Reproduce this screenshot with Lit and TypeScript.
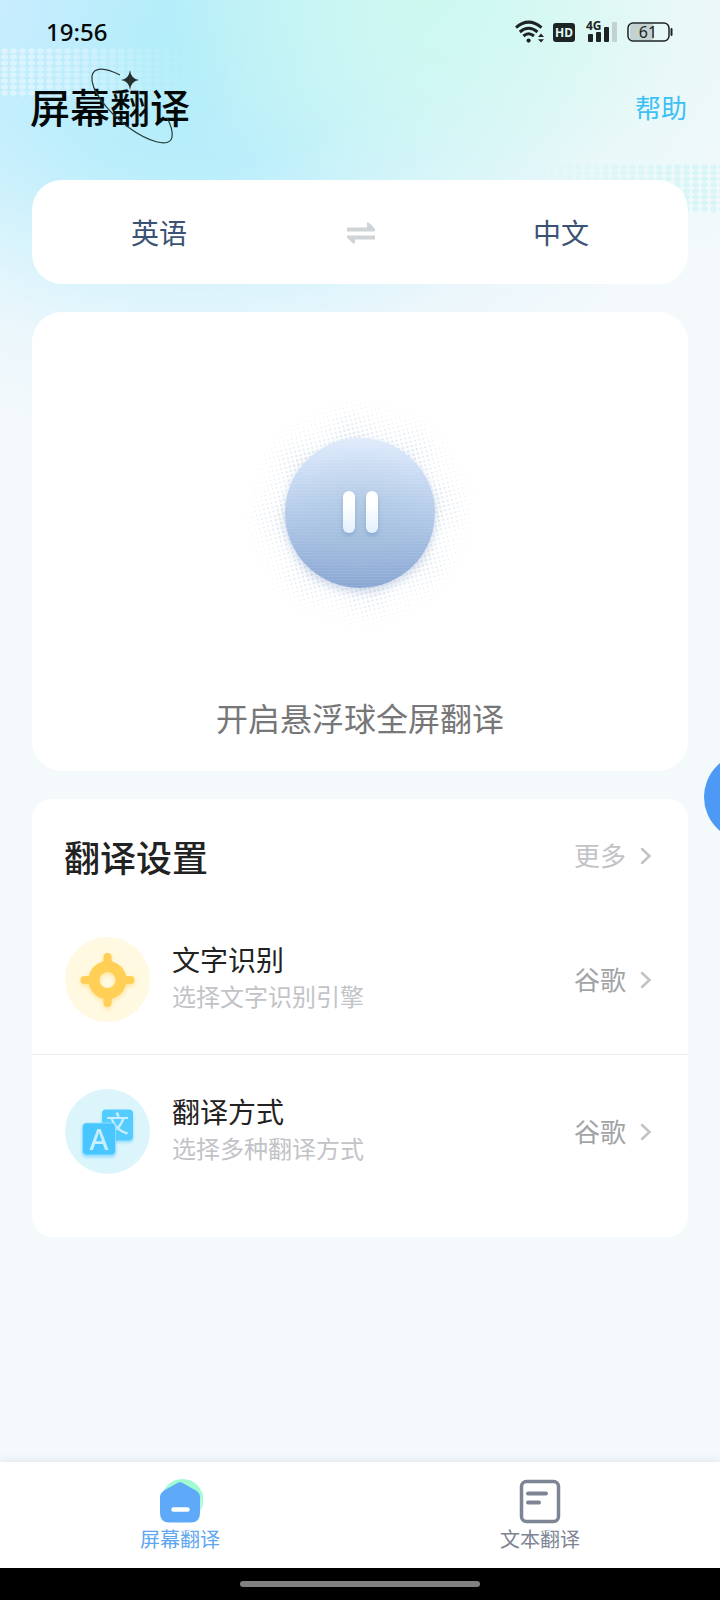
import { LitElement, html, svg, css } from "lit";
import { customElement, property, state } from "lit/decorators.js";
import { classMap } from "lit/directives/class-map.js";

/** Squares of a tilted halftone ring that shrink away from the knob. */
function halftonePath(inner: number, outer: number): string {
  const pitch = 4.4;
  const tilt = -0.24;
  const steps = Math.ceil(outer / pitch);
  let d = "";
  for (let i = -steps; i <= steps; i++) {
    for (let j = -steps; j <= steps; j++) {
      const x = (i * Math.cos(tilt) - j * Math.sin(tilt)) * pitch;
      const y = (i * Math.sin(tilt) + j * Math.cos(tilt)) * pitch;
      const r = Math.hypot(x, y);
      if (r < inner || r > outer) continue;
      const fade = 1 - (r - inner) / (outer - inner);
      const ripple = 0.82 + 0.18 * Math.cos(Math.atan2(y, x) * 8 + 0.8);
      const s = 0.3 + 2.8 * fade * ripple;
      d += `M${(x - s / 2).toFixed(2)} ${(y - s / 2).toFixed(2)}h${s.toFixed(2)}v${s.toFixed(2)}h-${s.toFixed(2)}z`;
    }
  }
  return d;
}

const HALFTONE = halftonePath(72, 120);

const base = css`
  * {
    box-sizing: border-box;
  }
  svg {
    display: block;
    flex: none;
  }
  button {
    margin: 0;
    padding: 0;
    border: 0;
    background: none;
    font: inherit;
    color: inherit;
    cursor: pointer;
  }
  a {
    color: inherit;
    text-decoration: none;
  }
`;

@customElement("status-bar")
export class StatusBar extends LitElement {
  static styles = [
    base,
    css`
      :host {
        display: flex;
        align-items: center;
        justify-content: space-between;
        height: 64px;
        padding: 0 47px 0 46px;
      }
      .time {
        font-size: 24px;
        line-height: 32px;
        font-weight: 500;
        color: #050808;
      }
      .icons {
        display: flex;
        align-items: center;
        gap: 8px;
      }
      .latin {
        font-family: "Noto Sans", sans-serif;
      }
    `,
  ];

  render() {
    return html`
      <span class="time">19:56</span>
      <span class="icons">
        <svg width="30" height="24" viewBox="0 0 30 24" aria-label="Wi-Fi">
          <g fill="none" stroke="#1d2424" stroke-width="3">
            <path d="M1 7.6Q13.5-3.4 26.5 7.6" />
            <path d="M4.800 12Q13.500 4.600 22.500 12" />
            <path d="M8.400 16Q13.500 11.600 19 16" />
          </g>
          <circle cx="13.600" cy="20.600" r="2.100" fill="#1d2424" />
          <path d="M23 17l3-3.600 3 3.600zM23 19.200l3 3.400 3-3.400z" fill="#1d2424" />
        </svg>
        <svg width="22" height="24" viewBox="0 0 22 24" aria-label="HD">
          <rect y="3" width="22" height="19" rx="3" fill="#1d2424" />
          <text class="latin" x="11" y="17" text-anchor="middle" font-size="12" font-weight="700" fill="#e4f8f6">HD</text>
        </svg>
        <svg width="36" height="32" viewBox="0 -4 36 32" aria-label="4G">
          <text class="latin" x="3" y="10" font-size="12" font-weight="700" fill="#1d2424">4G</text>
          <g fill="#1d2424">
            <rect x="5" y="14" width="5" height="8" rx="1" />
            <rect x="13" y="12" width="5" height="10" rx="1" />
            <rect x="21" y="7" width="5" height="15" rx="1" />
          </g>
          <rect x="29" y="2" width="5" height="20" rx="1" fill="#c3d2d1" />
        </svg>
        <svg width="46" height="24" viewBox="0 0 46 24" aria-label="61%">
          <rect x="3" y="4" width="24" height="16" rx="3" fill="#c3d2d1" />
          <rect x="1" y="3" width="41" height="18" rx="5" fill="none" stroke="#1d2424" stroke-width="1.500" />
          <path d="M44.500 9v6" stroke="#1d2424" stroke-width="2" stroke-linecap="round" />
          <text class="latin" x="21" y="18" text-anchor="middle" font-size="16" fill="#1d2424">61</text>
        </svg>
      </span>
    `;
  }
}

@customElement("setting-row")
export class SettingRow extends LitElement {
  @property() heading = "";
  @property() note = "";
  @property() value = "";
  @property() icon = "";

  static styles = [
    base,
    css`
      :host {
        display: block;
      }
      .row {
        display: flex;
        align-items: center;
        width: 100%;
        gap: 22px;
        padding: 34px 36px 32px 33px;
        text-align: left;
      }
      .copy {
        flex: 1;
        display: flex;
        flex-direction: column;
        padding-bottom: 4px;
      }
      .heading {
        font-size: 28px;
        line-height: 38px;
        color: #222;
      }
      .note {
        font-size: 24px;
        line-height: 36px;
        color: #c2c3c7;
      }
      .value {
        display: flex;
        align-items: center;
        gap: 14px;
        font-size: 26px;
        line-height: 36px;
        color: #a3a4a8;
      }
      .glyph {
        font-family: "Noto Sans", "Noto Sans CJK SC", sans-serif;
      }
    `,
  ];

  private target() {
    return html`<svg width="85" height="85" viewBox="0 0 85 85" aria-hidden="true">
      <defs>
        <filter id="glow" x="-30%" y="-30%" width="160%" height="160%">
          <feDropShadow dx="0" dy="2" stdDeviation="2" flood-color="#ffc94a" flood-opacity="0.5" />
        </filter>
      </defs>
      <circle cx="42.500" cy="42.500" r="42.500" fill="#fff9e1" />
      <g filter="url(#glow)" fill="none" stroke="#ffcf57">
        <circle cx="42.500" cy="43" r="13.500" stroke-width="11" />
        <path d="M42.500 20v6M42.500 60v6M19.500 43h6M59.500 43h6" stroke-width="8" stroke-linecap="round" />
      </g>
    </svg>`;
  }

  private translate() {
    return html`<svg width="85" height="85" viewBox="0 0 85 85" aria-hidden="true">
      <defs>
        <filter id="glow" x="-30%" y="-30%" width="160%" height="160%">
          <feDropShadow dx="0" dy="2" stdDeviation="1.500" flood-color="#4cc4ff" flood-opacity="0.5" />
        </filter>
      </defs>
      <circle cx="42.500" cy="42.500" r="42.500" fill="#dcf5fb" />
      <g filter="url(#glow)">
        <rect x="37" y="20.500" width="31" height="31" rx="4" fill="#54ccff" />
        <text class="glyph" x="52.500" y="43" text-anchor="middle" font-size="23" font-weight="500" fill="#c9efff">文</text>
      </g>
      <g filter="url(#glow)">
        <rect x="17.500" y="34" width="33" height="32" rx="4" fill="#48c6ff" stroke="#9be1ff" stroke-width="0.800" />
        <text class="glyph" x="34" y="60.500" text-anchor="middle" font-size="29" font-weight="500" fill="#c9efff">A</text>
      </g>
    </svg>`;
  }

  render() {
    return html`
      <button class="row" type="button">
        ${this.icon === "target" ? this.target() : this.translate()}
        <span class="copy">
          <span class="heading">${this.heading}</span>
          <span class="note">${this.note}</span>
        </span>
        <span class="value">
          ${this.value}
          <svg width="12" height="20" viewBox="0 0 12 20" aria-hidden="true">
            <path d="M2 3l7.500 7-7.500 7" fill="none" stroke="#c2c3c7" stroke-width="2.500" stroke-linecap="round" />
          </svg>
        </span>
      </button>
    `;
  }
}

@customElement("app-root")
export class AppRoot extends LitElement {
  @state() private source = "英语";
  @state() private dest = "中文";
  @state() private tab = 0;

  static styles = [
    base,
    css`
      :host {
        position: relative;
        display: flex;
        flex-direction: column;
        min-height: 100vh;
        overflow: hidden;
        font-family: "Noto Sans", "Noto Sans CJK SC", sans-serif;
        background:
          radial-gradient(ellipse 160px 220px at 0 0, rgba(200, 236, 255, 0.9), rgba(200, 236, 255, 0) 100%),
          radial-gradient(ellipse 260px 210px at 430px 0, rgba(204, 249, 240, 0.95), rgba(204, 249, 240, 0) 100%),
          radial-gradient(ellipse 400px 250px at 560px 40px, rgba(228, 249, 244, 0.7), rgba(228, 249, 244, 0) 100%),
          radial-gradient(ellipse 560px 400px at 190px 50px, #b2edf9 0, #b9eefb 30%, rgba(200, 240, 252, 0.75) 52%, rgba(224, 244, 251, 0.45) 76%, rgba(245, 249, 252, 0) 100%),
          #f4f9fc;
      }
      .dots {
        position: absolute;
        height: 49px;
        background-size: 9px 6px;
      }
      .dots-left {
        top: 48px;
        left: 0;
        width: 200px;
        background-image: radial-gradient(ellipse 4px 3px at center, rgba(255, 255, 255, 0.42) 75%, transparent 100%);
        mask-image: linear-gradient(to right, #000 15%, transparent);
      }
      .dots-right {
        top: 164px;
        right: 0;
        width: 200px;
        background-image: radial-gradient(ellipse 4px 3px at center, rgba(200, 243, 245, 0.6) 75%, transparent 100%);
        mask-image: linear-gradient(to left, #000 15%, transparent);
      }
      status-bar,
      .header,
      .main,
      .tabs {
        position: relative;
      }
      .header {
        display: flex;
        align-items: center;
        justify-content: space-between;
        height: 88px;
        padding: 0 33px 0 30px;
      }
      .title {
        position: relative;
        margin: 0;
        font-size: 40px;
        line-height: 56px;
        font-weight: 500;
        color: #050808;
      }
      .orbit {
        position: absolute;
        top: -18px;
        left: 54px;
      }
      .help {
        font-size: 26px;
        line-height: 36px;
        color: #3cbff5;
      }
      .main {
        flex: 1;
        display: flex;
        flex-direction: column;
        gap: 28px;
        padding: 28px 32px;
      }
      .card {
        background: #fff;
        border-radius: 30px;
      }
      .languages {
        display: grid;
        grid-template-columns: 1fr 148px 1fr;
        height: 104px;
        font-size: 28px;
        color: #3a5273;
      }
      .swap {
        display: grid;
        place-items: center;
      }
      .capture {
        display: flex;
        flex-direction: column;
        align-items: center;
        gap: 52px;
        padding: 71px 20px 28px;
      }
      .stage {
        display: grid;
        place-items: center;
      }
      .stage > * {
        grid-area: 1 / 1;
      }
      .knob {
        display: grid;
        place-items: center;
        width: 150px;
        height: 150px;
        border-radius: 50%;
        background:
          radial-gradient(circle at 50% 55%, rgba(160, 190, 210, 0.35), rgba(160, 190, 210, 0) 65%),
          repeating-linear-gradient(rgba(255, 255, 255, 0.08) 0 1px, rgba(255, 255, 255, 0) 1px 3px),
          linear-gradient(#dfebfc, #b2cae9 52%, #88a6d3);
        box-shadow: 0 4px 10px rgba(120, 148, 196, 0.35);
      }
      .caption {
        margin: 0;
        font-size: 32px;
        line-height: 48px;
        color: #777;
      }
      .settings {
        border-radius: 20px;
        padding-bottom: 31px;
      }
      .settings-head {
        display: flex;
        align-items: flex-start;
        justify-content: space-between;
        padding: 34px 36px 18px 32px;
      }
      .subtitle {
        margin: 0;
        font-size: 36px;
        line-height: 52px;
        font-weight: 500;
        color: #222;
      }
      .more {
        display: flex;
        align-items: center;
        gap: 14px;
        font-size: 26px;
        line-height: 46px;
        color: #c2c3c7;
      }
      .divided {
        border-bottom: 1px solid #ededee;
      }
      .bubble {
        position: absolute;
        top: 753px;
        right: -72px;
        width: 88px;
        height: 88px;
        border-radius: 50%;
        background: #4c9af5;
      }
      .tabs {
        display: grid;
        grid-template-columns: 1fr 1fr;
        background: #fff;
        box-shadow: 0 -1px 8px rgba(60, 70, 80, 0.12);
      }
      .tab {
        display: flex;
        flex-direction: column;
        align-items: center;
        gap: 2px;
        padding: 16px 0 14px;
        font-size: 20px;
        line-height: 28px;
        color: #7d8494;
      }
      .tab.active {
        color: #5ea6ef;
      }
      .gesture {
        position: relative;
        display: grid;
        place-items: center;
        height: 32px;
        background: #000;
      }
      .handle {
        width: 33.333%;
        height: 6px;
        border-radius: 3px;
        background: #808080;
      }
    `,
  ];

  private swap() {
    [this.source, this.dest] = [this.dest, this.source];
  }

  render() {
    return html`
      <div class="dots dots-left"></div>
      <div class="dots dots-right"></div>
      <status-bar></status-bar>
      <header class="header">
        <h1 class="title">
          屏幕翻译
          <svg class="orbit" width="96" height="88" viewBox="84 62 96 88" aria-hidden="true">
            <path
              d="M120 75C106 68 94 66 92 76C90 90 108 112 128 127C147 141 170 149 172 137C173 131 171 125 167 118"
              fill="none" stroke="#26393d" stroke-width="1.200" />
            <path d="M130 70q1 9 9 10q-8 1-9 10q-1-9-9-10q8-1 9-10z" fill="#26302f" />
          </svg>
        </h1>
        <a class="help" href="#help">帮助</a>
      </header>

      <main class="main">
        <section class="card languages">
          <button type="button">${this.source}</button>
          <button class="swap" type="button" aria-label="交换" @click=${this.swap}>
            <svg width="30" height="24" viewBox="0 0 30 24">
              <path d="M2 11.500V7.500H22V2.500Q24 2 25.500 4L30 9V11.500Z" fill="#cfd4d6" />
              <path d="M30 15.500V19.500H10V23.500Q8 24 6.500 22L2 17.500V15.500Z" fill="#cfd4d6" />
            </svg>
          </button>
          <button type="button">${this.dest}</button>
        </section>

        <section class="card capture">
          <div class="stage">
            <svg width="260" height="260" viewBox="-130 -130 260 260" aria-hidden="true">
              ${svg`<path d=${HALFTONE} fill="#e6edf3" />`}
            </svg>
            <button class="knob" type="button" aria-label="开启">
              <svg width="48" height="56" viewBox="0 0 48 56">
                <defs>
                  <linearGradient id="bar" x1="0" y1="0" x2="0" y2="1">
                    <stop offset="0.300" stop-color="#fff" />
                    <stop offset="1" stop-color="#e4f0fe" />
                  </linearGradient>
                  <filter id="soft" x="-30%" y="-20%" width="160%" height="150%">
                    <feDropShadow dx="0" dy="3" stdDeviation="2" flood-color="#6d92c2" flood-opacity="0.500" />
                  </filter>
                </defs>
                <g fill="url(#bar)" filter="url(#soft)">
                  <rect x="7" y="6" width="12" height="42" rx="6" />
                  <rect x="30" y="6" width="12" height="42" rx="6" />
                </g>
              </svg>
            </button>
          </div>
          <p class="caption">开启悬浮球全屏翻译</p>
        </section>

        <section class="card settings">
          <div class="settings-head">
            <h2 class="subtitle">翻译设置</h2>
            <a class="more" href="#more">
              更多
              <svg width="12" height="20" viewBox="0 0 12 20" aria-hidden="true">
                <path d="M2 3l7.500 7-7.500 7" fill="none" stroke="#c2c3c7" stroke-width="2.500" stroke-linecap="round" />
              </svg>
            </a>
          </div>
          <setting-row class="divided" icon="target" heading="文字识别" note="选择文字识别引擎" value="谷歌"></setting-row>
          <setting-row icon="translate" heading="翻译方式" note="选择多种翻译方式" value="谷歌"></setting-row>
        </section>
      </main>

      <nav class="tabs">
        <button type="button" class=${classMap({ tab: true, active: this.tab === 0 })} @click=${() => (this.tab = 0)}>
          <svg width="46" height="46" viewBox="0 0 46 46" aria-hidden="true">
            <defs>
              <linearGradient id="leaf" x1="0" y1="0" x2="0" y2="1">
                <stop offset="0.400" stop-color="#9ffbd0" />
                <stop offset="1" stop-color="#d3f3f6" />
              </linearGradient>
            </defs>
            <circle cx="25.500" cy="22" r="21" fill="url(#leaf)" />
            <path
              d="M20 5.200Q23 3.400 26 5.200L39 12.400Q43 15 43 19V35Q43 44.500 34 44.500H12Q3 44.500 3 35V19Q3 15 7 12.400Z"
              fill="#5eaaf8" />
            <path d="M16.500 31.500h14" stroke="#fff" stroke-width="4.500" stroke-linecap="round" />
          </svg>
          屏幕翻译
        </button>
        <button type="button" class=${classMap({ tab: true, active: this.tab === 1 })} @click=${() => (this.tab = 1)}>
          <svg width="46" height="46" viewBox="0 0 46 46" aria-hidden="true">
            <g fill="none" stroke="#7d8494" stroke-linecap="round">
              <rect x="4.500" y="3.500" width="37" height="40" rx="5" stroke-width="3.500" />
              <path d="M11 15.500h18M11 24.500h11" stroke-width="4" />
            </g>
          </svg>
          文本翻译
        </button>
      </nav>
      <div class="gesture"><div class="handle"></div></div>
      <button class="bubble" type="button" aria-label="悬浮球"></button>
    `;
  }
}
